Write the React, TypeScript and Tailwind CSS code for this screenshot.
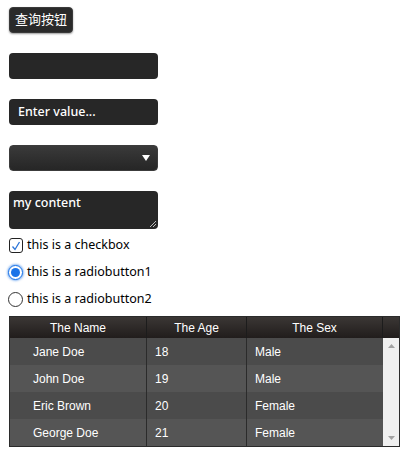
import { useState } from 'react'

const rows = [
  { name: 'Jane Doe', age: '18', sex: 'Male' },
  { name: 'John Doe', age: '19', sex: 'Male' },
  { name: 'Eric Brown', age: '20', sex: 'Female' },
  { name: 'George Doe', age: '21', sex: 'Female' },
]

const uiFont = { fontFamily: '"Noto Sans", "Noto Sans CJK SC", sans-serif' }
const tableFont = { fontFamily: '"Liberation Sans", Arial, sans-serif' }

export default function App() {
  const [checked, setChecked] = useState(true)
  const [radio, setRadio] = useState(1)

  return (
    <div className="min-h-screen bg-white pl-[9px] pt-[7px] text-black" style={uiFont}>
      <button className="flex h-[26px] w-[64px] items-center justify-center rounded-[4px] border border-[#3a3a3a] bg-[#2a2a2a] text-[13px] text-white shadow-[0_1px_2px_rgba(0,0,0,0.4)]">
        查询按钮
      </button>

      <div className="mt-[20px] h-[26px] w-[149px] rounded-[4px] bg-[#272727]" />

      <div className="mt-[20px] flex h-[26px] w-[149px] items-center rounded-[4px] bg-[#272727] pl-[9px] text-[12.5px] font-medium text-white">
        Enter value...
      </div>

      <div className="mt-[20px] flex h-[26px] w-[149px] items-center justify-end rounded-[4px] border border-[#3c3c3c] bg-gradient-to-b from-[#3a3a3a] to-[#262626] pr-[7px]">
        <svg width="8" height="6" viewBox="0 0 8 6">
          <path d="M0 0H8L4 6Z" fill="#ffffff" />
        </svg>
      </div>

      <div className="relative mt-[20px] h-[38px] w-[149px] rounded-[4px] bg-[#272727] pl-[4px] pt-[3px] text-[12.5px] font-medium leading-[18px] text-white">
        my content
        <svg className="absolute bottom-[2px] right-[2px]" width="6" height="6" viewBox="0 0 6 6">
          <path d="M6 0L0 6M6 3L3 6" stroke="#bbbbbb" strokeWidth="1" />
        </svg>
      </div>

      <label className="mt-[9px] flex h-[15px] items-center text-[12.5px] leading-none" onClick={() => setChecked(!checked)}>
        <span className="flex h-[15px] w-[14px] items-center justify-center rounded-[3px] border border-[#222] bg-white">
          {checked && (
            <svg width="10" height="10" viewBox="0 0 10 10">
              <path d="M1.5 5.5L4 8.5L8.5 1" fill="none" stroke="#2a74d8" strokeWidth="1.3" />
            </svg>
          )}
        </span>
        <span className="ml-[4px]">this is a checkbox</span>
      </label>

      <label className="mt-[12px] flex h-[15px] items-center text-[12.5px] leading-none" onClick={() => setRadio(1)}>
        <span className="-ml-[1px] flex h-[15px] w-[15px] items-center justify-center rounded-full border border-[#1a73e8] bg-white shadow-[0_0_2px_1px_rgba(26,115,232,0.5)]">
          {radio === 1 && <span className="h-[9px] w-[9px] rounded-full bg-[#1a73e8]" />}
        </span>
        <span className="ml-[4px]">this is a radiobutton1</span>
      </label>

      <label className="mt-[12px] flex h-[15px] items-center text-[12.5px] leading-none" onClick={() => setRadio(2)}>
        <span className="-ml-[1px] flex h-[15px] w-[15px] items-center justify-center rounded-full border border-[#333] bg-white">
          {radio === 2 && <span className="h-[9px] w-[9px] rounded-full bg-[#1a73e8]" />}
        </span>
        <span className="ml-[4px]">this is a radiobutton2</span>
      </label>

      <div className="mt-[9px] w-[391px] border border-[#2b2b2b] text-[12px] text-white" style={tableFont}>
        <div className="flex h-[21px] bg-gradient-to-b from-[#3b3735] to-[#211d1c]">
          <div className="flex w-[137px] items-center justify-center border-r border-[#1c1c1c]">The Name</div>
          <div className="flex w-[100px] items-center justify-center border-r border-[#1c1c1c]">The Age</div>
          <div className="flex w-[136px] items-center justify-center border-r border-[#1c1c1c]">The Sex</div>
          <div className="flex-1" />
        </div>
        <div className="flex">
          <div className="w-[373px]">
            {rows.map((r, i) => (
              <div key={r.name} className={`flex h-[27px] items-center ${i % 2 === 0 ? 'bg-[#4b4b4b]' : 'bg-[#555555]'}`}>
                <div className="flex h-full w-[137px] items-center border-r border-[#2b2b2b] pl-[23px]">{r.name}</div>
                <div className="flex h-full w-[100px] items-center border-r border-[#2b2b2b] pl-[8px]">{r.age}</div>
                <div className="flex h-full flex-1 items-center pl-[8px]">{r.sex}</div>
              </div>
            ))}
          </div>
          <div className="flex flex-1 flex-col items-center justify-between bg-[#f0f0f0] py-[6px]">
            <svg width="7" height="4" viewBox="0 0 7 4">
              <path d="M0 4H7L3.5 0Z" fill="#a3a3a3" />
            </svg>
            <svg width="7" height="4" viewBox="0 0 7 4">
              <path d="M0 0H7L3.5 4Z" fill="#a3a3a3" />
            </svg>
          </div>
        </div>
      </div>
    </div>
  )
}
